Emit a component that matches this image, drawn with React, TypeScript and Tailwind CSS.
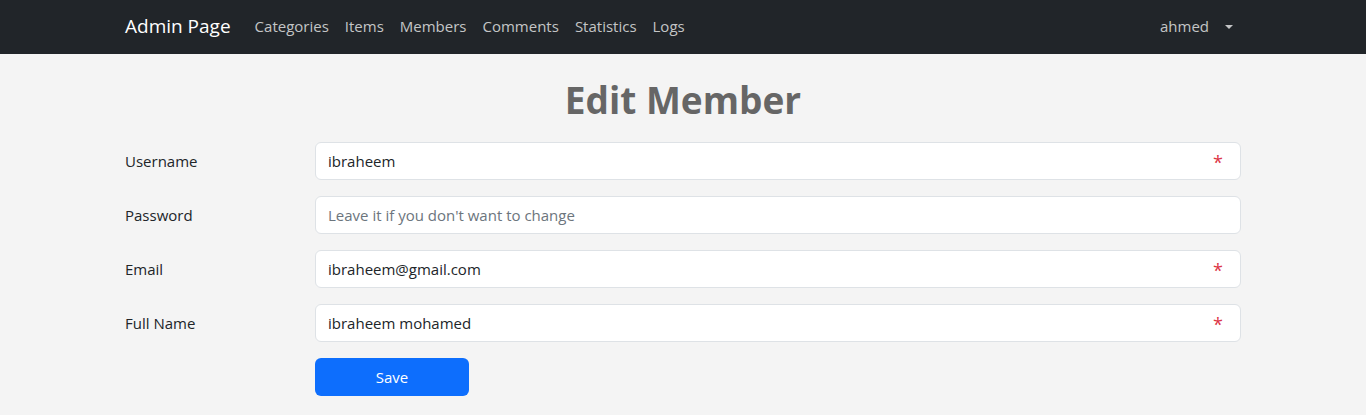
import React from 'react';

const font = { fontFamily: '"Open Sans", "Noto Sans", sans-serif' };

const links = ['Categories', 'Items', 'Members', 'Comments', 'Statistics', 'Logs'];

// Single form row: label column + input column
const Field: React.FC<{ label: string, value?: string, placeholder?: string, required?: boolean }> = ({ label, value, placeholder, required }) => (
  <div className="flex items-center mb-4">
    <label className="w-[190px] text-[15px] text-[#212529]">{label}</label>
    <div className="flex-1 relative">
      <input
        readOnly
        defaultValue={value}
        placeholder={placeholder}
        className="w-full h-[38px] bg-white border border-[#dee2e6] rounded-md px-3 text-[15px] text-[#212529] placeholder:text-[#6c757d] outline-none"
        style={font}
      />
      {required && (
        <span className="absolute right-[18px] top-[11px] text-[#dc3545] text-[18px] leading-none">*</span>
      )}
    </div>
  </div>
);

export default function App() {
  return (
    <div className="min-h-[415px] bg-[#f4f4f4]" style={font}>
      {/* Navbar */}
      <nav className="bg-[#212529] h-[54px]">
        <div className="w-[1116px] mx-auto h-full flex items-center pb-[1px]">
          <span className="text-white text-[19px] mr-4">Admin Page</span>
          <ul className="flex items-center">
            {links.map(l => (
              <li key={l} className="px-2 text-[15px] text-[#c4c5c6]">{l}</li>
            ))}
          </ul>
          <div className="ml-auto flex items-center pl-2 pr-2 text-[15px] text-[#c4c5c6]">
            ahmed
            <span className="ml-[16px] w-0 h-0 border-x-[4px] border-x-transparent border-t-[4px] border-t-[#c4c5c6]"></span>
          </div>
        </div>
      </nav>

      <div className="w-[1116px] mx-auto">
        <h1 className="text-center text-[37px] font-bold text-[#666666] leading-[48px] mt-[22px] mb-[18px]">Edit Member</h1>

        <form>
          <Field label="Username" value="ibraheem" required />
          <Field label="Password" placeholder="Leave it if you don't want to change" />
          <Field label="Email" value="ibraheem@gmail.com" required />
          <Field label="Full Name" value="ibraheem mohamed" required />
          <div className="flex">
            <div className="w-[190px]"></div>
            <button type="button" className="w-[154px] h-[38px] bg-[#0d6efd] text-white text-[15px] rounded-md" style={font}>
              Save
            </button>
          </div>
        </form>
      </div>
    </div>
  );
}
